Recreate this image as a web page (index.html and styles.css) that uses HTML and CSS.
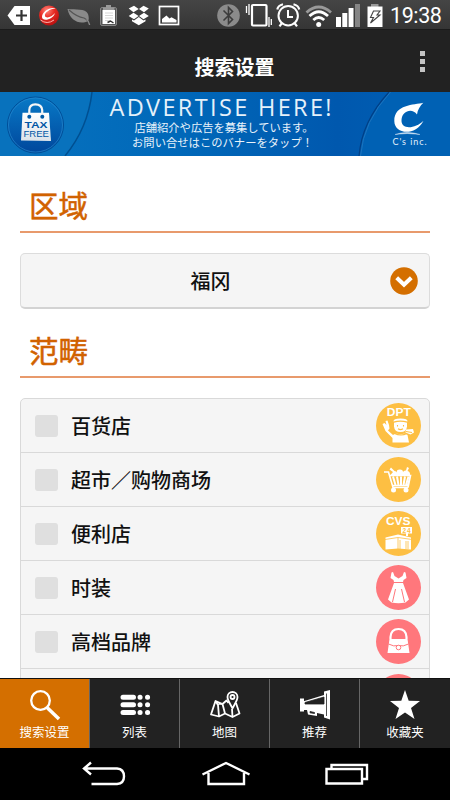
FILE: index.html
```
<!DOCTYPE html>
<html lang="zh-CN">
<head>
    <meta charset="UTF-8">
    <meta name="viewport" content="width=device-width, initial-scale=1.0">
    <title>搜索设置</title>
    <link rel="stylesheet" href="styles.css">
</head>
<body>
    <div class="status-bar">
        <svg width="34" height="30" viewBox="0 0 34 30"><path d="M7.500 15.500L14.500 6H30V25H14.500Z" fill="#fff"/><path d="M16 15.500H27M21.500 10V21" stroke="#333" stroke-width="2.200"/></svg>
        <svg width="30" height="30" viewBox="34 0 30 30">
            <defs><radialGradient id="ball" cx=".4" cy=".25" r=".8"><stop offset="0" stop-color="#ff8a80"/><stop offset=".45" stop-color="#e82c24"/><stop offset="1" stop-color="#b50d0d"/></radialGradient></defs>
            <circle cx="49" cy="15.500" r="10" fill="url(#ball)"/>
            <path d="M55.500 8.500C50 6.500 42 12 42 17C42 22 53 20 55 13C52 17 46 19 45 16C44 13 50 8.500 55.500 8.500Z" fill="#fff"/>
            <path d="M40.500 20Q47 25 54 20" fill="none" stroke="#ffb3ad" stroke-width="1"/>
        </svg>
        <svg width="30" height="30" viewBox="64 0 30 30"><path d="M67.500 9C76 10 85 8 88 14C89 17 89 20 88 21C80 25 70 21 67.500 9Z" fill="#8a8a8a"/><path d="M69 10Q77 17 84 18Q88 20 89.500 25" fill="none" stroke="#555" stroke-width="1.200"/><path d="M86.500 19.500Q89 21 89.700 25" fill="none" stroke="#8a8a8a" stroke-width="1.300"/></svg>
        <svg width="30" height="30" viewBox="94 0 30 30">
            <rect x="100.500" y="7.500" width="16" height="18" rx="1.500" fill="#555" stroke="#858585"/>
            <rect x="102.500" y="10" width="12.500" height="14" fill="#fff"/>
            <path d="M103 7.500H106V5H111V7.500H114.500V10H103Z" fill="#999"/>
            <path d="M105 13H113M105 15.500H113M105 18H113M105 20.500H110" stroke="#ccc" stroke-width=".8"/>
            <path d="M107.500 22.500L110.500 21L113.500 23" fill="none" stroke="#333" stroke-width="1.500"/>
        </svg>
        <svg width="30" height="30" viewBox="124 0 30 30" fill="#fff">
            <path d="M134 5.700L138.700 8.900L133.500 12.200L128.700 8.500ZM143.500 5.700L148.800 8.500L144 12.200L139 8.900ZM133.500 12.800L138.600 16L134 19.300L128.700 15.900ZM144 12.800L148.800 15.900L143.500 19.300L139 16ZM138.800 17L143.500 20.400L145.500 19.500V21.300L138.800 25.300L132 21.300V19.500L134 20.400Z"/>
        </svg>
        <svg width="30" height="30" viewBox="154 0 30 30"><rect x="159.500" y="6.500" width="19" height="18" fill="none" stroke="#fff" stroke-width="1.700"/><path d="M162 22.500V19L166.500 15.500L169.500 18.500L171.500 17.300L176.500 20V22.500Z" fill="#fff"/></svg>
        <span class="spacer"></span>
        <svg width="29" height="30" viewBox="214 0 29 30"><circle cx="228.500" cy="15.500" r="11.300" fill="#8b8b8b"/><path d="M223.500 10.500L232.500 19.500L228.500 23.500V7.500L232.500 11.500L223.500 20.500" fill="none" stroke="#3c3c3c" stroke-width="1.600"/></svg>
        <svg width="30" height="30" viewBox="243 0 30 30" fill="none" stroke="#fff"><rect x="252" y="5" width="14.500" height="20.500" rx="1" stroke-width="2.200"/><path d="M249 4V15M246.500 6V13M269 17V27M271.300 19V25" stroke-width="1.300"/></svg>
        <svg width="30" height="30" viewBox="273 0 30 30" fill="none" stroke="#fff"><circle cx="288.200" cy="15.700" r="9.700" stroke-width="2"/><path d="M288 10V17H293" stroke-width="2"/><path d="M277.300 9.500Q278 5.500 283 4.300M293.500 4.300Q298.500 5.500 299.200 9.500M282 23L279.500 26.300M294.500 23L297 26.300" stroke-width="2.200"/></svg>
        <svg width="31" height="30" viewBox="303 0 31 30" fill="none" stroke="#fff" stroke-width="2.800"><path d="M306.500 12.500Q318.700 1.500 331 12.500" stroke="#999"/><path d="M309.500 16Q318.700 7.500 328 16M313.300 20Q318.700 15 324.200 20"/><circle cx="318.700" cy="24.500" r="2.500" fill="#fff" stroke="none"/></svg>
        <svg width="30" height="30" viewBox="334 0 30 30" fill="#fff"><path d="M336 17H341V27H336ZM342.300 13H347.300V27H342.300ZM348.600 8H353.500V27H348.600Z"/><path d="M355 4H360V27H355Z" fill="#858585"/></svg>
        <svg width="26" height="30" viewBox="364 0 26 30"><path d="M371 4H378.500V7H371Z" fill="#999"/><path d="M367.500 6.500H382.500V27H367.500Z" fill="#fff"/><path d="M373.500 11L380 11L377 15H380L370.500 23L373.500 17.500H370.500Z" fill="none" stroke="#444" stroke-width="1.100"/></svg>
        <span class="clock">19:38</span>
    </div>

    <header class="header">
        <h1>搜索设置</h1>
        <div class="more"><i></i><i></i><i></i></div>
    </header>

    <svg class="banner" lang="ja" width="450" height="64" viewBox="0 0 450 64">
        <defs>
            <linearGradient id="sea"><stop offset="0" stop-color="#0873bf"/><stop offset=".4" stop-color="#0068b9"/><stop offset=".75" stop-color="#0058ae"/><stop offset="1" stop-color="#0060b4"/></linearGradient>
            <linearGradient id="disc" x2="0" y2="1"><stop offset="0" stop-color="#0879c6"/><stop offset="1" stop-color="#00479c"/></linearGradient>
            <linearGradient id="bag" x2="0" y2="1"><stop offset="0" stop-color="#fff"/><stop offset="1" stop-color="#dce3ea"/></linearGradient>
        </defs>
        <rect width="450" height="64" fill="url(#sea)"/>
        <path d="M0 0H92Q88 36 65 64H0Z" fill="#0872bd"/>
        <path d="M92 0Q88 36 65 64" fill="none" stroke="#004f91" stroke-width="1.500"/>
        <path d="M450 0H389Q362 29 359 64H450Z" fill="#0061b4"/>
        <path d="M389 0Q362 29 359 64" fill="none" stroke="#003f86" stroke-width="1.200"/>
        <path d="M390.500 0Q363.500 29 360.500 64" fill="none" stroke="#1c74be"/>
        <circle cx="35.500" cy="33" r="28" fill="url(#disc)" stroke="#004e98"/>
        <circle cx="35.500" cy="33" r="27" fill="none" stroke="#2c8fd3" stroke-width=".6"/>
        <path d="M22.500 20.700H49L51 49L21 48.500Z" fill="url(#bag)"/>
        <path d="M29.300 24V18Q29.500 12.300 35.300 12.300Q41.800 12.300 42.200 18V24" fill="none" stroke="#f6f6f6" stroke-width="2.200"/>
        <circle cx="29.300" cy="24.700" r="2" fill="#0059a5"/><circle cx="42.300" cy="24.700" r="2" fill="#0059a5"/>
        <text class="tax" x="24.500" y="36" textLength="23" lengthAdjust="spacingAndGlyphs">TAX</text>
        <text class="free" x="23.500" y="45.300" textLength="25.500" lengthAdjust="spacingAndGlyphs">FREE</text>
        <text class="ad-title" x="109.500" y="24.200" textLength="222">ADVERTISE HERE!</text>
        <text class="ad-line" x="134.500" y="40.200" textLength="179">店舗紹介や広告を募集しています。</text>
        <text class="ad-line" x="132" y="55.300" textLength="181">お問い合せはこのバナーをタップ！</text>
        <path d="M423.300 10.700C414 13 394.300 12 394.300 29C394.300 42 415 45 423.500 28.700C415 37 401 38 401.500 28C402 19 412 15.500 417 22.500C417.500 18 420 14 423.300 10.700Z" fill="#fff"/>
        <path d="M395 42.500Q407 38.500 420 42.500Q407 40.500 395 42.500Z" fill="#fff" stroke="#d8e8f8" stroke-width=".4"/>
        <text class="ad-company" x="392.500" y="52.500" textLength="34">C's inc.</text>
    </svg>

    <main class="content">
        <h2>区域</h2>
        <div class="select">
            <span>福冈</span>
            <svg width="28" height="28" viewBox="0 0 28 28"><circle cx="14" cy="14" r="13.800" fill="#d46f00"/><path d="M6.700 10.700L14 17.800L21.300 10.700" fill="none" stroke="#fff" stroke-width="4"/></svg>
        </div>
        <h2>范畴</h2>
        <ul class="category-list">
            <li>
                <i class="checkbox"></i><span>百货店</span>
                <svg width="45" height="45" viewBox="0 0 45 45">
                    <circle cx="22.500" cy="22.500" r="22.500" fill="#fdbf43"/>
                    <text class="badge-text" x="10.800" y="13.300" textLength="24" lengthAdjust="spacingAndGlyphs">DPT</text>
                    <g fill="#fff">
                        <path d="M17.500 18.500Q17 15.500 24.500 15.500Q32 15.500 31.500 18.500Q24 16.500 17.500 18.500Z"/>
                        <path d="M18 19.800Q24.500 17.500 31 19.800V23.500Q30.500 29 24.500 29Q18.500 29 18 23.500Z"/>
                        <path d="M6.500 21L8.500 20L10.500 22L9.500 18L11.500 17.500L13 22L13.500 25.500L12 27.500L17 32Q20 30 24.500 31.500Q29 30 31.500 32L33 39.500H16.500V35L9.500 28Z"/>
                        <path d="M30 26.500L37 26L38 29.500L34.500 31.500L29.500 29.500Z"/>
                    </g>
                    <path d="M21.500 22V23.500M27.500 22V23.500M22 25.800Q24.500 27.500 27 25.800M18.500 30.500Q25 33.500 31 30.500M30 28.500L36 29.500" fill="none" stroke="#fdbf43" stroke-width="1.100"/>
                </svg>
            </li>
            <li>
                <i class="checkbox"></i><span>超市／购物商场</span>
                <svg width="45" height="45" viewBox="0 0 45 45">
                    <circle cx="22.500" cy="22.500" r="22.500" fill="#fdbf43"/>
                    <path d="M8 15H12.500L17 30.500H32M13 18.500H34.500L31.500 28.500H16.500M32 30.500L34.500 18.500" fill="none" stroke="#fff" stroke-width="1.600"/>
                    <path d="M17 19.500L19.500 28M21 19.500L22.500 28M25 19.500V28M29 19.500L27.500 28M32.500 19.500L30 28" stroke="#fff" stroke-width="2"/>
                    <path d="M14.500 18L17 15L13.500 12.500L15 10.500L18.500 14Q20.500 14 21 15.500Q20 12.500 24 12.500Q27 12.500 27 15Q28 13 30 13.500L31 10L33 11L31.500 14Q34.500 14.500 34 18.500Z" fill="#fff"/>
                    <circle cx="17.500" cy="33" r="2.500" fill="#fff"/><circle cx="30" cy="33" r="2.500" fill="#fff"/>
                </svg>
            </li>
            <li>
                <i class="checkbox"></i><span>便利店</span>
                <svg width="45" height="45" viewBox="0 0 45 45">
                    <circle cx="22.500" cy="22.500" r="22.500" fill="#fdbf43"/>
                    <text class="badge-text" x="10" y="13.500" textLength="24.500" lengthAdjust="spacingAndGlyphs">CVS</text>
                    <path d="M25 16H36V22.500H32V25H30V22.500H25Z" fill="#fff"/>
                    <text class="badge-small" x="26.500" y="21.500" textLength="8">24</text>
                    <path d="M9.500 26.500L22 23.500L35 26.500V38.500L22 37.500L9.500 38.500Z" fill="#fff"/>
                    <path d="M9 28.500L22 26.500L36 28.500M22 27V38M24 29V38M30 30V38M32 30V38" fill="none" stroke="#fdbf43" stroke-width=".8"/>
                </svg>
            </li>
            <li>
                <i class="checkbox"></i><span>时装</span>
                <svg width="45" height="45" viewBox="0 0 45 45">
                    <circle cx="22.500" cy="22.500" r="22.500" fill="#ff777c"/>
                    <path d="M17 7L18.500 11L22.500 13.500L26.500 11L28 7L29.500 7.500L30.500 13L27.500 15L27 17H18L17.500 15L14.500 13L15.500 7.500ZM18 18H27L33 34.500L29.500 37.500Q22.500 39 15.500 37.500L12 34.500Z" fill="#fff"/>
                    <path d="M19.500 24L16.500 37M25.500 24L28.500 37" stroke="#ff777c"/>
                </svg>
            </li>
            <li>
                <i class="checkbox"></i><span>高档品牌</span>
                <svg width="45" height="45" viewBox="0 0 45 45">
                    <circle cx="22.500" cy="22.500" r="22.500" fill="#ff777c"/>
                    <path d="M14.500 20V18Q15 10 22.500 10Q30 10 30.500 18V20" fill="none" stroke="#fff" stroke-width="2.200"/>
                    <path d="M13.500 20H31.500L33.500 34H11.500Z" fill="#fff"/>
                    <path d="M12.500 25Q18 28 22.500 26.500Q27 28 32.500 25" fill="none" stroke="#ff777c"/>
                    <circle cx="22.500" cy="28.500" r="2.300" fill="#fff" stroke="#ff777c"/>
                </svg>
            </li>
            <li>
                <i class="checkbox"></i>
                <svg class="last" width="45" height="45" viewBox="0 0 45 45"><circle cx="22.500" cy="22.500" r="22.500" fill="#ff777c"/></svg>
            </li>
        </ul>
    </main>

    <nav class="tabs">
        <a class="tab active">
            <svg width="40" height="40" viewBox="0 0 40 40" fill="none" stroke="#fff"><circle cx="15.500" cy="17.500" r="9.300" stroke-width="2.300"/><path d="M22 24.500L34 36" stroke-width="3.500"/></svg>
            <span>搜索设置</span>
        </a>
        <a class="tab">
            <svg width="40" height="40" viewBox="0 0 40 40" stroke="#fff" stroke-width="5" stroke-linecap="round"><path d="M8 14.200H18.500M8 21.700H18.500M8 29.500H18.500M25 14.200H25.100M25 21.700H25.100M25 29.500H25.100M32.500 14.200H32.600M32.500 21.700H32.600M32.500 29.500H32.600"/></svg>
            <span>列表</span>
        </a>
        <a class="tab">
            <svg width="40" height="40" viewBox="0 0 40 40" fill="none" stroke="#fff" stroke-width="1.800" stroke-linejoin="round"><path d="M23.500 20L21.500 17.500L17.500 21L10.500 18L6 31.500L14 33.500L20 30.500L27.500 34L34.500 30.500L31 20M10.500 18L13 22L14 33.500M17.500 21L20 30.500M27 26L27.500 34M13.500 20.500L17.500 21"/><path d="M27.500 25.500C25.500 21 22.500 17.500 22.500 14A5 5 0 0 1 32.500 14C32.500 17.500 29.500 21 27.500 25.500Z" fill="#222"/><circle cx="27.500" cy="14" r="2"/></svg>
            <span>地图</span>
        </a>
        <a class="tab">
            <svg width="40" height="40" viewBox="0 0 40 40"><path d="M5 15.500H9V18H9.500L29 12V8.500L35 7V36.500L29 34.500V31.500L22 30V33L13 31.500L12 27H9V28.500H5Z" fill="#fff"/><path d="M10 19.500L29 14V21H10ZM31.500 10.500V33M15 28.500L19.500 29.500V30.500L15 29.800Z" fill="#222" stroke="#222" stroke-width=".8"/></svg>
            <span>推荐</span>
        </a>
        <a class="tab">
            <svg width="40" height="40" viewBox="0 0 40 40"><path d="M20 7L23.700 17.800L35 18L26 25L29.500 36L20 29.500L10.500 36L14 25L5 18L16.300 17.800Z" fill="#fff"/></svg>
            <span>收藏夹</span>
        </a>
    </nav>

    <div class="system-nav">
        <svg width="44" height="26" viewBox="82 760 44 26"><path d="M91.500 784H117Q124 783.500 124 776.500Q124 769 117 768.500H84M91 762.500L84 768.500L91 774.500"/></svg>
        <svg width="50" height="26" viewBox="200 760 50 26"><path d="M201.500 774.500L225 763L248.500 774.500M207.500 773V784H243V773"/></svg>
        <svg width="44" height="26" viewBox="325 760 44 26"><path d="M326.500 769H362V783.500H326.500ZM331.500 769V765H367V779H362"/></svg>
    </div>
</body>
</html>
```
FILE: styles.css
```
* {
    box-sizing: border-box;
}

body {
    font-family: "Noto Sans CJK SC", sans-serif;
    margin: 0;
    width: 450px;
    height: 800px;
    display: flex;
    flex-direction: column;
    overflow: hidden;
    background: #fff;
    color: #111;
}

svg {
    display: block;
    flex-shrink: 0;
}

.status-bar {
    height: 30px;
    flex-shrink: 0;
    display: flex;
    background: linear-gradient(#454545, #353535);
    border-bottom: 1px solid #1b1b1b;
}

.spacer {
    width: 30px;
}

.clock {
    font-family: Roboto, sans-serif;
    font-size: 21.5px;
    line-height: 32px;
    letter-spacing: -0.4px;
    color: #fff;
}

.header {
    height: 62px;
    flex-shrink: 0;
    display: grid;
    grid-template-columns: 1fr auto 1fr;
    align-items: center;
    padding: 11px 25px 0 44px;
    background: #222;
    color: #fff;
}

.header h1 {
    grid-column: 2;
    margin: 0;
    font-size: 20px;
    line-height: 30px;
}

.more {
    display: grid;
    gap: 2.5px;
    justify-self: end;
    padding-bottom: 10px;
}

.more i {
    width: 5px;
    height: 5.5px;
    background: #c4c4c4;
}

.tax, .free {
    font-family: "Liberation Sans", sans-serif;
    font-size: 9.4px;
    fill: #0056a5;
}

.tax {
    font-weight: bold;
}

.ad-title {
    font-family: "Open Sans", sans-serif;
    font-size: 23.5px;
    fill: #e5f1fa;
}

.ad-line {
    font-family: "Noto Sans CJK JP", sans-serif;
    font-size: 11.3px;
    fill: #e8f2fa;
}

.ad-company {
    font-family: Lato, sans-serif;
    font-size: 9px;
    fill: #e2effb;
}

.content {
    height: 522px;
    overflow: hidden;
    padding: 22px 20px 0;
}

h2 {
    height: 55px;
    margin: 0 0 20px;
    padding-left: 9px;
    border-bottom: 2px solid #e89a6c;
    font-size: 29.5px;
    font-weight: 400;
    line-height: 52px;
    color: #d16200;
    -webkit-text-stroke: 0.5px #d16200;
}

.select {
    height: 56px;
    margin-bottom: 14px;
    padding: 0 11px 0 21px;
    display: flex;
    align-items: center;
    background: #f5f5f5;
    border: 1px solid #dcdcdc;
    border-bottom: 2px solid #d3d3d3;
    border-radius: 5px;
    font-size: 20px;
    font-weight: 500;
}

.select span {
    flex: 1;
    padding-right: 11px;
    padding-bottom: 1px;
    text-align: center;
}

.category-list {
    margin: 0;
    padding: 0;
    list-style: none;
    display: grid;
    grid-auto-rows: 54.1px;
    background: #f5f5f5;
    border: 1px solid #d9d9d9;
    border-radius: 5px;
}

.category-list li {
    display: flex;
    align-items: center;
    padding: 0 8px 0 14px;
    border-bottom: 1px solid #d9d9d9;
    font-size: 20px;
    font-weight: 500;
}

.category-list span {
    margin: 0 auto 0 13px;
    padding-bottom: 1px;
}

.category-list .last {
    margin-left: auto;
}

.checkbox {
    width: 23px;
    height: 22px;
    border-radius: 3px;
    background: #dfdfdf;
}

.badge-text, .badge-small {
    font-family: "Liberation Sans", sans-serif;
    font-size: 10.5px;
    font-weight: bold;
    fill: #fff;
}

.badge-small {
    font-size: 6.5px;
    fill: #fdbf43;
}

.tabs {
    height: 70px;
    flex-shrink: 0;
    display: grid;
    grid-template-columns: repeat(5, 1fr);
    background: #222;
    border-top: 1px solid #111;
}

.tab {
    display: flex;
    flex-direction: column;
    align-items: center;
    padding-top: 4px;
    border-right: 1px solid #666;
    color: #fff;
    font-size: 12.5px;
    line-height: 18px;
}

.tab:last-child {
    border-right: 0;
}

.tab.active {
    background: #d46f00;
}

.system-nav {
    height: 52px;
    flex-shrink: 0;
    display: flex;
    justify-content: space-between;
    padding: 12px 81px 0 82px;
    background: #000;
}

.system-nav svg {
    fill: none;
    stroke: #fff;
    stroke-width: 2.4;
}
```
